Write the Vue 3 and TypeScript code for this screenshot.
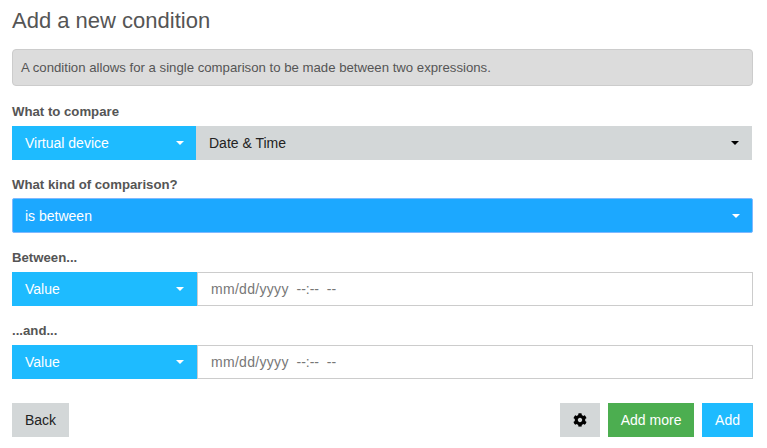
<script setup lang="ts">
const description = 'A condition allows for a single comparison to be made between two expressions.'
const ranges = ['Between...', '...and...']
</script>

<template>
  <div class="page">
    <h1 class="title">Add a new condition</h1>
    <div class="alert">{{ description }}</div>

    <label class="label first">What to compare</label>
    <div class="group device-group">
      <div class="prefix">
        <span>Virtual device</span>
        <i class="caret"></i>
      </div>
      <div class="device">
        <span>Date &amp; Time</span>
        <i class="caret dark"></i>
      </div>
    </div>

    <label class="label tight">What kind of comparison?</label>
    <div class="select">
      <span>is between</span>
      <i class="caret"></i>
    </div>

    <template v-for="range in ranges" :key="range">
      <label class="label">{{ range }}</label>
      <div class="group">
        <div class="prefix wide">
          <span>Value</span>
          <i class="caret"></i>
        </div>
        <div class="date-input">
          <span><span class="date-part">mm/dd/yyyy</span>&nbsp; --:-- &nbsp;--</span>
        </div>
      </div>
    </template>

    <div class="actions">
      <button class="btn grey">Back</button>
      <div class="right">
        <button class="btn grey icon" aria-label="Settings">
          <svg width="14" height="14" viewBox="0 0 512 512">
            <path fill="#000" d="M487.4 315.7l-42.6-24.6c4.3-23.2 4.3-47 0-70.2l42.6-24.6c4.9-2.8 7.1-8.6 5.5-14-11.1-35.6-30-67.8-54.7-94.6-3.8-4.1-10-5.1-14.8-2.3L380.8 110c-17.9-15.4-38.5-27.3-60.8-35.1V25.8c0-5.6-3.9-10.5-9.4-11.7-36.7-8.2-74.3-7.8-109.2 0-5.5 1.2-9.4 6.1-9.4 11.7V75c-22.2 7.9-42.8 19.8-60.8 35.1L88.7 85.5c-4.9-2.8-11-1.9-14.8 2.3-24.7 26.7-43.6 58.9-54.7 94.6-1.7 5.4.6 11.2 5.5 14L67.3 221c-4.3 23.2-4.3 47 0 70.2l-42.6 24.6c-4.9 2.8-7.1 8.6-5.5 14 11.1 35.6 30 67.8 54.7 94.6 3.8 4.1 10 5.1 14.8 2.3l42.6-24.6c17.9 15.4 38.5 27.3 60.8 35.1v49.2c0 5.6 3.9 10.5 9.4 11.7 36.7 8.2 74.3 7.8 109.2 0 5.5-1.2 9.4-6.1 9.4-11.7v-49.2c22.2-7.9 42.8-19.8 60.8-35.1l42.6 24.6c4.9 2.8 11 1.9 14.8-2.3 24.7-26.7 43.6-58.9 54.7-94.6 1.5-5.5-.7-11.3-5.6-14.1zM256 336c-44.1 0-80-35.9-80-80s35.9-80 80-80 80 35.9 80 80-35.9 80-80 80z"/>
          </svg>
        </button>
        <button class="btn green">Add more</button>
        <button class="btn blue">Add</button>
      </div>
    </div>
  </div>
</template>

<style scoped>
.page {
  width: 741px;
  padding: 8px 0 0 12px;
  font-family: "Liberation Sans", Arial, sans-serif;
  font-size: 14px;
  color: #555;
}

.title {
  margin: 0;
  font-size: 22px;
  font-weight: 400;
  line-height: 26px;
  color: #555;
}

.alert {
  margin-top: 15px;
  height: 37px;
  box-sizing: border-box;
  padding: 0 8px;
  display: flex;
  align-items: center;
  font-size: 13.2px;
  background: #dcdcdc;
  border: 1px solid #ccc;
  border-radius: 4px;
}

.label {
  display: block;
  margin-top: 17px;
  margin-bottom: 6px;
  height: 16px;
  line-height: 16px;
  font-size: 13.2px;
  font-weight: 700;
}

.label.first {
  margin-top: 18px;
}

.label.tight {
  margin-bottom: 5px;
}

.group {
  display: flex;
  height: 34px;
}

.device-group {
  width: 740px;
}

.prefix {
  width: 184px;
  flex: none;
  display: flex;
  align-items: center;
  justify-content: space-between;
  padding: 0 12px 0 13px;
  box-sizing: border-box;
  background: #1ebbff;
  color: #fff;
}

.prefix.wide {
  width: 185px;
  padding-right: 13px;
}

.device {
  flex: 1;
  display: flex;
  align-items: center;
  justify-content: space-between;
  padding: 0 13px;
  background: #d3d7d8;
  color: #222;
}

.select {
  width: 741px;
  height: 35px;
  box-sizing: border-box;
  display: flex;
  align-items: center;
  justify-content: space-between;
  padding: 0 12px;
  background: #1ca8ff;
  border: 1px solid #7fb9ff;
  border-radius: 2px;
  color: #fff;
}

.date-input {
  flex: 1;
  box-sizing: border-box;
  display: flex;
  align-items: center;
  padding-left: 13px;
  border: 1px solid #ccc;
  color: #777;
}

.date-part {
  letter-spacing: 0.3px;
}

.caret {
  width: 0;
  height: 0;
  border-top: 4px solid #fff;
  border-left: 4px solid transparent;
  border-right: 4px solid transparent;
}

.caret.dark {
  border-top-color: #000;
}

.actions {
  display: flex;
  justify-content: space-between;
  margin-top: 24px;
}

.right {
  display: flex;
  gap: 8px;
}

.btn {
  height: 34px;
  padding: 0 13px;
  border: 0;
  border-radius: 0;
  font-family: inherit;
  font-size: 14px;
}

.btn.grey {
  background: #d3d7d8;
  color: #222;
}

.btn.icon {
  width: 40px;
  padding: 0;
  display: flex;
  align-items: center;
  justify-content: center;
}

.btn.green {
  width: 86px;
  padding: 0;
  background: #4cae50;
  color: #fff;
}

.btn.blue {
  background: #1ebbff;
  color: #fff;
}
</style>
